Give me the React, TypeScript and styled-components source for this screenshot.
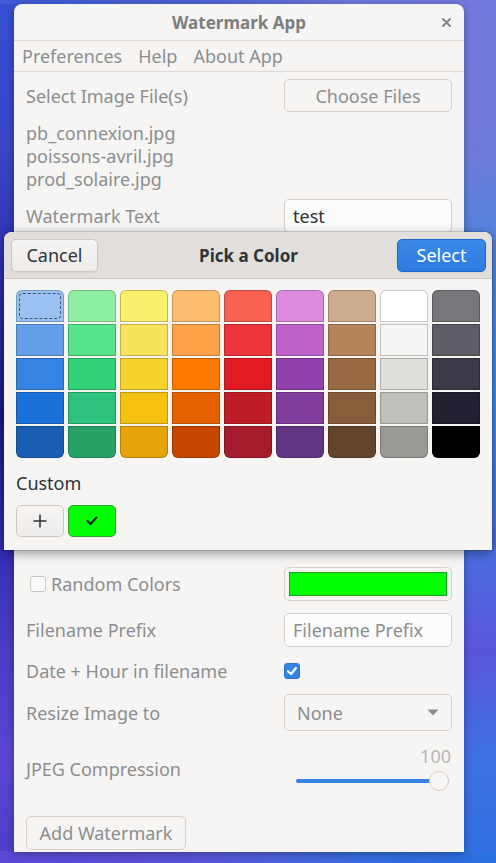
import React from "react";
import styled, { createGlobalStyle } from "styled-components";

const Global = createGlobalStyle`
  html, body { margin: 0; padding: 0; }
  body {
    width: 496px;
    height: 863px;
    overflow: hidden;
    font-family: "Noto Sans", "DejaVu Sans", sans-serif;
    font-size: 18px;
    background:
      linear-gradient(to right, #5a48d4 0%, #5b52d8 35%, #4d62dc 55%, #356ee0 75%, #2a6ee0 100%) left bottom / 100% 12px no-repeat,
      linear-gradient(to right, #3f5ad6 0%, #4a62d8 40%, #6a78dc 70%, #7478dc 100%) left top / 100% 4px no-repeat,
      linear-gradient(to bottom, #3550d0 0px, #3a45c8 150px, #2a2aa8 300px, #1c1a8a 420px, #2a2ab0 520px, #4a3dc8 650px, #5a45d0 760px, #4a3fc8 863px) left top / 50% 100% no-repeat,
      linear-gradient(to bottom, #7478dc 0px, #6f7ad8 150px, #4f86e0 250px, #3f88e6 400px, #4a6ee0 550px, #5a55d8 650px, #3d72e2 760px, #2f6ee0 863px) right top / 50% 100% no-repeat;
  }
`;

const Stage = styled.div`
  position: relative;
  width: 496px;
  height: 863px;
  padding: 4px 0 0 14px;
  box-sizing: border-box;
`;

const Window = styled.div`
  width: 450px;
  height: 848px;
  background: #f6f5f4;
  border-radius: 8px 8px 0 0;
  box-shadow: 0 2px 8px rgba(0, 0, 0, 0.3);
  display: flex;
  flex-direction: column;
  color: #8b8e8f;
  overflow: hidden;
`;

const TitleBar = styled.div`
  height: 36px;
  border-bottom: 1px solid #dcd8d4;
  display: grid;
  grid-template-columns: 1fr auto 1fr;
  align-items: center;
  padding: 0 13px;
`;

const Title = styled.div`
  grid-column: 2;
  font-weight: bold;
  font-size: 17px;
  color: #7c7e80;
`;

const CloseBox = styled.div`
  grid-column: 3;
  justify-self: end;
  display: flex;
  align-items: center;
`;

const MenuBar = styled.div`
  height: 30px;
  border-bottom: 1px solid #dcd8d4;
  display: flex;
  align-items: center;
`;

const MenuItem = styled.div`
  padding: 0 8px;
  color: #8b8e8f;
`;

const Content = styled.div`
  padding: 0 12px;
  display: flex;
  flex-direction: column;
`;

const Row = styled.div<{ $h: number; $mt?: number }>`
  display: grid;
  grid-template-columns: 1fr 168px;
  align-items: center;
  height: ${(p) => p.$h}px;
  margin-top: ${(p) => p.$mt ?? 0}px;
`;

const Label = styled.div`
  color: #8b8e8f;
  white-space: nowrap;
`;

const FileList = styled.div`
  margin-top: 10px;
  line-height: 23px;
  color: #8b8e8f;
`;

const Spacer = styled.div<{ $h: number }>`
  height: ${(p) => p.$h}px;
`;

const BgButton = styled.div<{ $w?: number }>`
  height: 100%;
  box-sizing: border-box;
  width: ${(p) => (p.$w ? `${p.$w}px` : "auto")};
  border: 1px solid #d6d1cd;
  border-radius: 5px;
  background: #f6f5f4;
  display: flex;
  align-items: center;
  justify-content: center;
  color: #8b8e8f;
`;

const Entry = styled.div<{ $dark?: boolean }>`
  height: 100%;
  box-sizing: border-box;
  border: 1px solid #d6d1cd;
  border-radius: 5px;
  background: #fcfcfc;
  display: flex;
  align-items: center;
  padding: 0 8px;
  color: ${(p) => (p.$dark ? "#2e3436" : "#8b8e8f")};
`;

const CheckRow = styled.div`
  display: flex;
  align-items: center;
  gap: 5px;
  padding-left: 4px;
`;

const CheckBox = styled.div<{ $on?: boolean }>`
  width: 16px;
  height: 16px;
  box-sizing: border-box;
  border-radius: 3px;
  border: 1px solid ${(p) => (p.$on ? "#2a76d8" : "#c9c5c1")};
  background: ${(p) => (p.$on ? "#3584e4" : "#fbfafa")};
  display: flex;
  align-items: center;
  justify-content: center;
`;

const ColorButton = styled.div`
  height: 100%;
  box-sizing: border-box;
  border: 1px solid #d6d1cd;
  border-radius: 5px;
  padding: 4px;
  display: flex;
`;

const ColorFill = styled.div<{ $c: string }>`
  flex: 1;
  background: ${(p) => p.$c};
  border: 1px solid #1f9e1f;
`;

const Combo = styled.div`
  height: 100%;
  box-sizing: border-box;
  border: 1px solid #d6d1cd;
  border-radius: 5px;
  display: flex;
  align-items: center;
  justify-content: space-between;
  padding: 0 12px;
  color: #8b8e8f;
`;

const Scale = styled.div`
  display: flex;
  flex-direction: column;
  align-self: start;
  margin-top: 4px;
`;

const ScaleValue = styled.div`
  text-align: right;
  line-height: 22px;
  padding-right: 1px;
  color: #b7b7b6;
`;

const ScaleTrackArea = styled.div`
  position: relative;
  height: 24px;
  margin: 2px 3px 0 12px;
  display: flex;
  align-items: center;
`;

const Track = styled.div`
  flex: 1;
  height: 4px;
  border-radius: 2px;
  background: #3584e4;
`;

const Knob = styled.div`
  position: absolute;
  right: 0;
  top: 2px;
  width: 20px;
  height: 20px;
  box-sizing: border-box;
  border-radius: 50%;
  border: 1px solid #d3cfcb;
  background: #f8f7f6;
`;

const Footer = styled.div`
  margin-top: 19px;
  height: 34px;
  display: flex;
`;

/* ---------- dialog ---------- */

const Dialog = styled.div`
  position: absolute;
  left: 4px;
  top: 232px;
  width: 488px;
  height: 318px;
  background: #f6f5f4;
  border-radius: 8px 8px 0 0;
  box-shadow: 0 0 0 1px rgba(0, 0, 0, 0.12), 0 3px 12px rgba(0, 0, 0, 0.4);
  color: #2e3436;
  display: flex;
  flex-direction: column;
  overflow: hidden;
`;

const Header = styled.div`
  height: 46px;
  border-bottom: 1px solid #cdc7c2;
  background: #e1dedb;
  display: grid;
  grid-template-columns: 1fr auto 1fr;
  align-items: center;
  padding: 0 6px 0 7px;
`;

const HeaderTitle = styled.div`
  font-weight: bold;
  font-size: 17px;
  color: #2e3436;
`;

const HButton = styled.div<{ $primary?: boolean; $w: number }>`
  width: ${(p) => p.$w}px;
  height: 33px;
  box-sizing: border-box;
  border-radius: 5px;
  display: flex;
  align-items: center;
  justify-content: center;
  border: 1px solid ${(p) => (p.$primary ? "#1b6acb" : "#cdc7c2")};
  background: ${(p) =>
    p.$primary
      ? "linear-gradient(to bottom, #3a89e7, #2c7be0)"
      : "linear-gradient(to bottom, #f6f5f4, #edebe9)"};
  color: ${(p) => (p.$primary ? "#ffffff" : "#2e3436")};
  justify-self: ${(p) => (p.$primary ? "end" : "start")};
  box-shadow: 0 1px 1px rgba(0, 0, 0, 0.06);
`;

const DialogBody = styled.div`
  padding: 11px 12px 0 12px;
  display: flex;
  flex-direction: column;
`;

const Palette = styled.div`
  display: grid;
  grid-template-columns: repeat(9, 48px);
  column-gap: 4px;
`;

const PaletteColumn = styled.div`
  display: flex;
  flex-direction: column;
  gap: 2px;
`;

const Swatch = styled.div<{ $c: string; $pos: "top" | "mid" | "bottom" }>`
  position: relative;
  height: 32px;
  box-sizing: border-box;
  background: ${(p) => p.$c};
  border: 1px solid rgba(0, 0, 0, 0.22);
  border-radius: ${(p) =>
    p.$pos === "top" ? "6px 6px 0 0" : p.$pos === "bottom" ? "0 0 6px 6px" : "0"};
`;

const FocusRing = styled.div`
  position: absolute;
  inset: 2px;
  border: 1px dashed rgba(30, 40, 60, 0.75);
  border-radius: 4px;
`;

const CustomLabel = styled.div`
  margin-top: 15px;
  line-height: 20px;
`;

const CustomRow = styled.div`
  margin-top: 12px;
  display: flex;
  gap: 4px;
`;

const AddButton = styled.div`
  width: 48px;
  height: 32px;
  box-sizing: border-box;
  border: 1px solid #cdc7c2;
  border-radius: 5px;
  background: linear-gradient(to bottom, #f6f5f4, #edebe9);
  display: flex;
  align-items: center;
  justify-content: center;
`;

const CustomSwatch = styled.div<{ $c: string }>`
  width: 48px;
  height: 32px;
  box-sizing: border-box;
  border: 1px solid #2aa52a;
  border-radius: 5px;
  background: ${(p) => p.$c};
  display: flex;
  align-items: center;
  justify-content: center;
`;

const palette: string[][] = [
  ["#99c1f1", "#62a0ea", "#3584e4", "#1c71d8", "#1a5fb4"],
  ["#8ff0a4", "#57e389", "#33d17a", "#2ec27e", "#26a269"],
  ["#f9f06b", "#f8e45c", "#f6d32d", "#f5c211", "#e5a50a"],
  ["#ffbe6f", "#ffa348", "#ff7800", "#e66100", "#c64600"],
  ["#f66151", "#ed333b", "#e01b24", "#c01c28", "#a51d2d"],
  ["#dc8add", "#c061cb", "#9141ac", "#813d9c", "#613583"],
  ["#cdab8f", "#b5835a", "#986a44", "#865e3c", "#63452c"],
  ["#ffffff", "#f6f5f4", "#deddda", "#c0bfbc", "#9a9996"],
  ["#77767b", "#5e5c64", "#3d3846", "#241f31", "#000000"],
];

const files = ["pb_connexion.jpg", "poissons-avril.jpg", "prod_solaire.jpg"];

export default function App() {
  return (
    <>
      <Global />
      <Stage>
        <Window>
          <TitleBar>
            <Title>Watermark App</Title>
            <CloseBox>
              <svg width="9" height="9" viewBox="0 0 9 9">
                <path d="M1 1 L8 8 M8 1 L1 8" stroke="#7c7e80" strokeWidth="1.8" strokeLinecap="round" />
              </svg>
            </CloseBox>
          </TitleBar>
          <MenuBar>
            <MenuItem>Preferences</MenuItem>
            <MenuItem>Help</MenuItem>
            <MenuItem>About App</MenuItem>
          </MenuBar>
          <Content>
            <Row $h={33} $mt={7}>
              <Label>Select Image File(s)</Label>
              <BgButton>Choose Files</BgButton>
            </Row>
            <FileList>
              {files.map((f) => (
                <div key={f}>{f}</div>
              ))}
            </FileList>
            <Row $h={34} $mt={8}>
              <Label>Watermark Text</Label>
              <Entry $dark>test</Entry>
            </Row>
            <Spacer $h={334} />
            <Row $h={34}>
              <CheckRow>
                <CheckBox />
                <Label>Random Colors</Label>
              </CheckRow>
              <ColorButton>
                <ColorFill $c="#00ff00" />
              </ColorButton>
            </Row>
            <Row $h={34} $mt={12}>
              <Label>Filename Prefix</Label>
              <Entry>Filename Prefix</Entry>
            </Row>
            <Row $h={34} $mt={7}>
              <Label>Date + Hour in filename</Label>
              <CheckBox $on>
                <svg width="12" height="12" viewBox="0 0 12 12">
                  <path d="M2 6.2 L5 9 L10 3" stroke="#ffffff" strokeWidth="2.2" fill="none" strokeLinecap="round" strokeLinejoin="round" />
                </svg>
              </CheckBox>
            </Row>
            <Row $h={37} $mt={6}>
              <Label>Resize Image to</Label>
              <Combo>
                <span>None</span>
                <svg width="12" height="7" viewBox="0 0 12 7">
                  <path d="M0.5 0.5 L11.5 0.5 L6 6.5 Z" fill="#8b8e8f" />
                </svg>
              </Combo>
            </Row>
            <Row $h={56} $mt={10}>
              <Label>JPEG Compression</Label>
              <Scale>
                <ScaleValue>100</ScaleValue>
                <ScaleTrackArea>
                  <Track />
                  <Knob />
                </ScaleTrackArea>
              </Scale>
            </Row>
            <Footer>
              <BgButton $w={160}>Add Watermark</BgButton>
            </Footer>
          </Content>
        </Window>

        <Dialog>
          <Header>
            <HButton $w={87}>Cancel</HButton>
            <HeaderTitle>Pick a Color</HeaderTitle>
            <HButton $w={89} $primary>
              Select
            </HButton>
          </Header>
          <DialogBody>
            <Palette>
              {palette.map((col, ci) => (
                <PaletteColumn key={ci}>
                  {col.map((c, ri) => (
                    <Swatch key={c} $c={c} $pos={ri === 0 ? "top" : ri === col.length - 1 ? "bottom" : "mid"}>
                      {ci === 0 && ri === 0 && <FocusRing />}
                    </Swatch>
                  ))}
                </PaletteColumn>
              ))}
            </Palette>
            <CustomLabel>Custom</CustomLabel>
            <CustomRow>
              <AddButton>
                <svg width="14" height="14" viewBox="0 0 14 14">
                  <path d="M7 0.5 V13.5 M0.5 7 H13.5" stroke="#2e3436" strokeWidth="1.6" />
                </svg>
              </AddButton>
              <CustomSwatch $c="#00ff00">
                <svg width="12" height="10" viewBox="0 0 12 10">
                  <path d="M1.5 5 L4.5 8 L10.5 1.5" stroke="#1a1a1a" strokeWidth="2" fill="none" strokeLinecap="round" strokeLinejoin="round" />
                </svg>
              </CustomSwatch>
            </CustomRow>
          </DialogBody>
        </Dialog>
      </Stage>
    </>
  );
}
